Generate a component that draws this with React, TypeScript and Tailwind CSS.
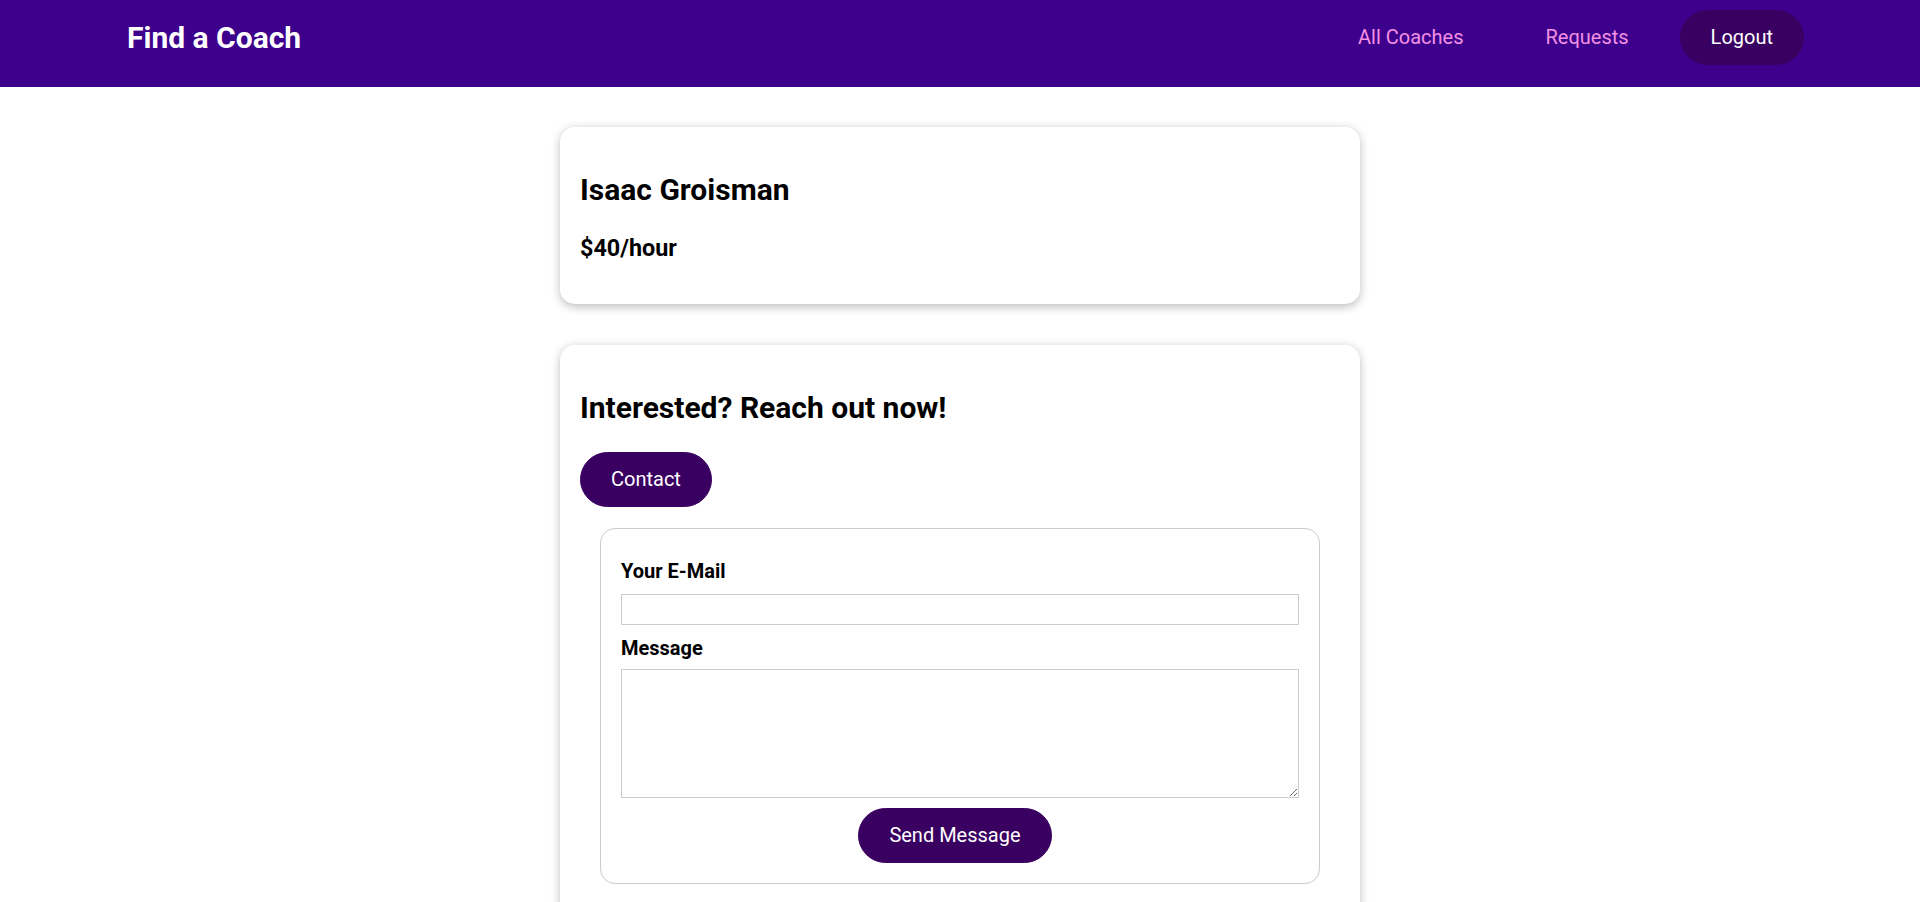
const navLinks = ["All Coaches", "Requests"];

function Header() {
  return (
    <header className="h-[87px] w-full bg-[#3d008d]">
      <nav className="mx-auto flex h-[74px] w-[1728px] items-center justify-between">
        <h1 className="px-[31px] text-[30px] font-bold leading-[35px] text-white">Find a Coach</h1>
        <ul className="mr-[20px] flex items-center gap-[20px]">
          {navLinks.map((l) => (
            <li key={l}>
              <a className="inline-block border border-transparent px-[30px] py-[15px] text-[20px] leading-[23px] text-[#f391e3]">
                {l}
              </a>
            </li>
          ))}
          <li>
            <button className="rounded-[30px] border border-[#3a0061] bg-[#3a0061] px-[30px] py-[15px] text-[20px] leading-[23px] text-white">
              Logout
            </button>
          </li>
        </ul>
      </nav>
    </header>
  );
}

function Card({ children }: { children: React.ReactNode }) {
  return (
    <section className="mx-auto w-[800px] rounded-[15px] bg-white p-[20px] shadow-[0_2.5px_10px_rgba(0,0,0,0.26)]">
      {children}
    </section>
  );
}

export default function App() {
  return (
    <div className="h-[902px] overflow-hidden bg-white font-['Roboto',sans-serif] text-black">
      <Header />
      <div className="mt-[40px]">
        <Card>
          <h2 className="mt-[25px] text-[30px] font-bold leading-[35px]">Isaac Groisman</h2>
          <h3 className="mt-[28px] mb-[22px] text-[23.4px] font-bold leading-[27px]">$40/hour</h3>
        </Card>
      </div>
      <div className="mt-[41px]">
        <Card>
          <h2 className="mt-[25px] text-[30px] font-bold leading-[35px]">Interested? Reach out now!</h2>
          <button className="mt-[27px] rounded-[30px] border border-[#3a0061] bg-[#3a0061] px-[30px] py-[15px] text-[20px] leading-[23px] text-white">
            Contact
          </button>
          <form className="mx-[20px] mt-[21px] mb-[20px] rounded-[15px] border border-[#ccc] p-[20px]">
            <div className="mt-[11px]">
              <label className="block text-[20px] font-bold leading-[23px]">Your E-Mail</label>
              <input type="email" className="mt-[11px] block h-[31px] w-full border border-[#ccc] px-1 text-[20px] outline-none" />
            </div>
            <div className="mt-[12px]">
              <label className="block text-[20px] font-bold leading-[23px]">Message</label>
              <textarea rows={5} className="mt-[9px] block h-[129px] w-full border border-[#ccc] px-1 text-[20px] outline-none" />
            </div>
            <div className="mt-[10px] mr-[10px] flex justify-center">
              <button
                type="button"
                className="rounded-[30px] border border-[#3a0061] bg-[#3a0061] px-[30px] py-[15px] text-[20px] leading-[23px] text-white"
              >
                Send Message
              </button>
            </div>
          </form>
        </Card>
      </div>
    </div>
  );
}
